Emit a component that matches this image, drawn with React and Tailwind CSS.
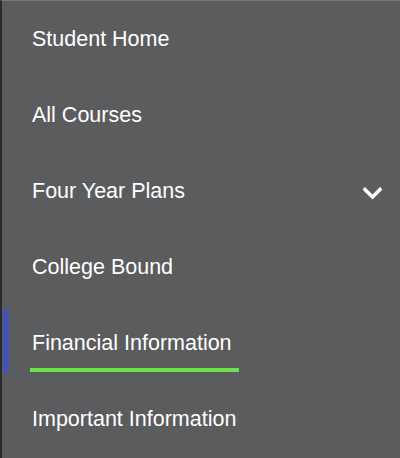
const items = [
  { label: "Student Home" },
  { label: "All Courses" },
  { label: "Four Year Plans", submenu: true },
  { label: "College Bound" },
  { label: "Financial Information", active: true },
  { label: "Important Information" },
];

export default function App() {
  return (
    <div className="w-[400px] h-[458px] bg-[#5b5c5e] border-l-[2px] border-l-[#2a2a2b] border-t border-t-[#77787a] overflow-hidden font-['Liberation_Sans',Arial,sans-serif]">
      <ul className="-mt-px">
        {items.map((item) => (
          <li
            key={item.label}
            className="relative h-[76px] flex items-center justify-between pt-[4px] pl-[30px] pr-[18px] text-white"
          >
            {item.active && (
              <div className="absolute left-px top-[5px] w-[6px] h-[64px] bg-[#4453b3]" />
            )}
            <span className="relative text-[21.5px] leading-none">
              {item.label}
              {item.active && (
                <span className="absolute -left-[2px] top-[35px] w-[209px] h-[4px] bg-[#6be34a]" />
              )}
            </span>
            {item.submenu && (
              <svg width="19" height="13" viewBox="0 0 19 13" className="mt-[3px]">
                <polyline
                  points="2,2.5 9.5,10 17,2.5"
                  fill="none"
                  stroke="white"
                  strokeWidth="3.4"
                  strokeLinecap="square"
                />
              </svg>
            )}
          </li>
        ))}
      </ul>
    </div>
  );
}
